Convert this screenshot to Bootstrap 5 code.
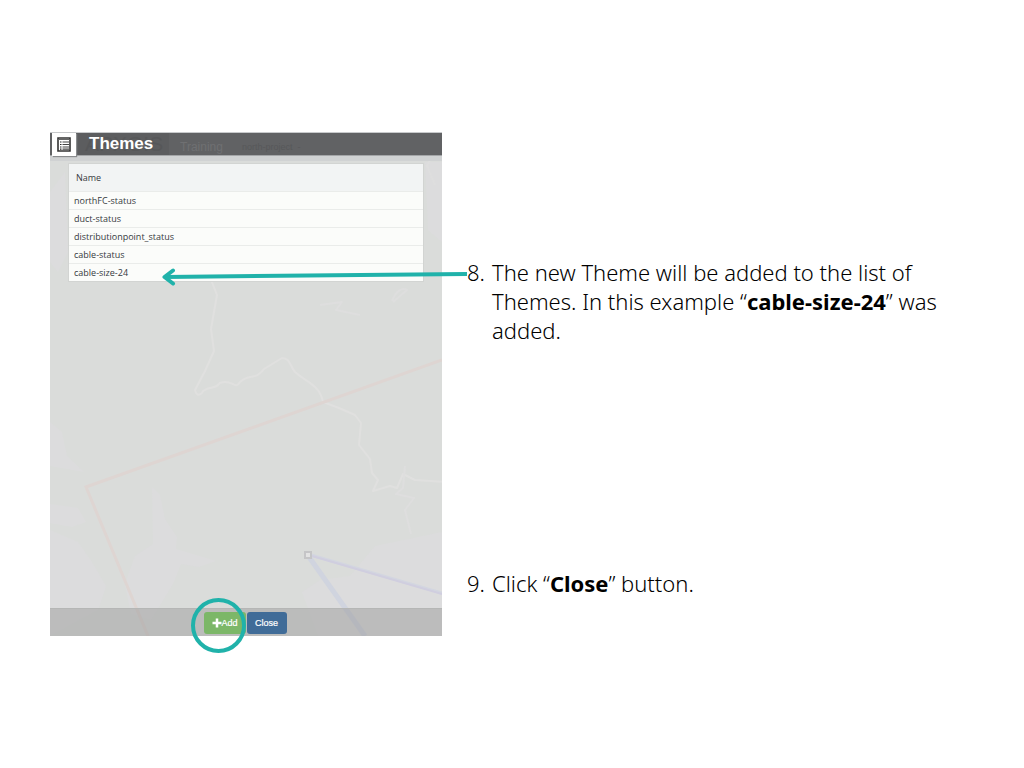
<!DOCTYPE html>
<html lang="en">
<head>
<meta charset="utf-8">
<meta name="viewport" content="width=device-width, initial-scale=1">
<title>Themes guide</title>
<link href="https://cdn.jsdelivr.net/npm/bootstrap@5.3.0/dist/css/bootstrap.min.css" rel="stylesheet">
<style>
body { background: #fff; color: #000; font-family: "Noto Sans", "Open Sans", sans-serif; }
.guide { display: grid; grid-template-columns: 392fr 507fr; column-gap: 25px; padding: 50px; }
.themes-panel { min-height: 504px; background: #dadcda; }
.map-art { inset: 0; width: 100%; height: 100%; }
.panel-head { height: 24px; background: #616264; border-top: 1px solid #c8cacc; border-bottom: 1px solid #a4a6a8; box-shadow: 0 5px 0 #d0d2d3; padding-left: 2px; font-family: "Liberation Sans", Arial, sans-serif; }
.menu-btn { width: 24px; height: 23px; background: #fff; border: 0; box-shadow: 1px 1px 1px #8a8c8e; }
.panel-title { width: 62px; margin-left: 13px; font-size: 17px; line-height: 22px; font-weight: 700; color: #fff; }
.ghost { color: #6f7072; line-height: 29px; white-space: nowrap; }
.ghost-brand { left: 27px; top: 0; width: 92px; height: 22px; padding-left: 8px; background: #5c5d5f; color: #565759; font-size: 21px; line-height: 22px; white-space: nowrap; }
.ghost-site { margin-left: 29px; font-size: 12px; }
.ghost-project { margin-left: 19px; font-size: 9px; color: #57585a; }
.theme-table { background: #fbfcfa; font-family: "Open Sans", "Noto Sans", sans-serif; font-size: 9px; line-height: 17px; color: #363a3e; outline: 1px solid #d2d4d2; }
.theme-table th { height: 27px; padding: 0 7px; font-weight: 400; background: #f2f4f4; }
.theme-table td { height: 18px; padding: 0 5px; border-top: 1px solid #eaecea; }
.table-area { padding: 8px 19px; }
.panel-foot { height: 28px; gap: 1px; padding-right: 2px; background: rgba(148, 148, 148, .45); border-top: 1px solid #b5b6b5; }
.foot-btn { height: 22px; border: 0; border-radius: 3px; padding: 0 8px; color: #fff; font: 9px/22px "Liberation Sans", Arial, sans-serif; -webkit-text-stroke: .2px #fff; }
.add-btn { width: 42px; background: #7cb768; }
.close-btn { width: 40px; background: #406c98; }
.ring { width: 55px; height: 55px; left: -13px; top: -14px; border: 4px solid #20b2aa; border-radius: 50%; pointer-events: none; }
.pointer { left: 112px; top: 132px; width: calc(100% - 87px); height: 24px; pointer-events: none; }
.steps { padding: 126px 0 38px; font-size: 22px; line-height: 29px; font-weight: 300; }
.step-no { flex: 0 0 25px; }
</style>
</head>
<body>
<main class="min-vh-100 d-flex align-items-center">
  <div class="guide w-100">
    <div class="position-relative">
      <section class="themes-panel position-relative d-flex flex-column" aria-label="Themes">
        <svg class="map-art position-absolute" viewBox="0 0 392 504" preserveAspectRatio="xMidYMid slice" aria-hidden="true" fill="none">
          <g fill="#dcdcdd">
            <path d="M0 290l12 10 5 24 17 16-34-6zM0 372l28 4 8 14-14 5-22-4zM0 398l28 12 14 20 14 24-8 24-48 26zM102 355l8 8 5 24 12 18-1 12 40 12-17 6-18-3-8 20-22 36-20-6-6-30 10-28 18-12zM252 460l18-12 30-4 25-30 67-14v104H268z"/>
            <path d="M0 60l15-20 3 80-10 20-8-10zM375 30h17v80l-14-12z"/>
          </g>
          <g stroke="#e0e0df" stroke-width="2" stroke-linejoin="round">
            <path d="M160 145l7 18-6 34 3 22-9 20-10 19c2 8 7 4 8 1 10-7 10 0 17-8 12-5 15 8 20-1 10-9 15-1 24-13l18-11c8 0 8 8 13 14 11 10 25 13 28 30l16 6 16 7 6 8-2 22 11 14 2 14 6 7-5 11 17-5 7 2 6-14 12 6 30 2"/>
          </g>
          <g stroke="#dedede" stroke-width="2" stroke-linejoin="round">
            <path d="M355 334l-2 22-7 6 18 4-9 12 6 24M270 173l22-3-6 8 24 5M342 169c4-10 10-14 15-11l-14 12M383 22l-6 12 8 19"/>
          </g>
          <path d="M98 504L36 355 392 228" stroke="#ded5d2" stroke-width="3"/>
          <path d="M259 425l56 79" stroke="#d0d4df" stroke-width="5"/>
          <path d="M261 423l131 38" stroke="#d3d6e0" stroke-width="3"/>
          <path d="M262 424l130 38" stroke="#d0cedf" stroke-width="2"/>
          <path d="M255 420h6v6h-6z" fill="#e3e3e3" stroke="#c5c5c7" stroke-width="2"/>
        </svg>

        <header class="panel-head position-relative d-flex align-items-start">
          <span class="ghost-brand position-absolute" aria-hidden="true">APXGIS</span>
          <button class="menu-btn position-relative p-0 d-flex align-items-center justify-content-center" type="button" aria-label="Theme list">
            <svg width="14" height="15" viewBox="0 0 14 15" fill="none">
              <path d="M1 1h12v13H1z" fill="#fff" stroke="#333" stroke-width="1.600"/>
              <path d="M1 2.500h12" stroke="#666"/>
              <path d="M3 5h1.500M3 7.500h1.500M3 10h1.500M3 12.200h1.500" stroke="#222" stroke-width="1.200"/>
              <path d="M5.500 5H12M5.500 7.500H12M5.500 10H12M5.500 12.200H12" stroke="#444" stroke-width="1.200"/>
            </svg>
          </button>
          <h1 class="panel-title position-relative mb-0">Themes</h1>
          <span class="ghost ghost-site">Training</span>
          <span class="ghost ghost-project">north-project &nbsp;-</span>
        </header>

        <div class="table-area position-relative flex-grow-1">
          <table class="theme-table w-100">
            <thead><tr><th scope="col">Name</th></tr></thead>
            <tbody>
              <tr><td>northFC-status</td></tr>
              <tr><td>duct-status</td></tr>
              <tr><td>distributionpoint_status</td></tr>
              <tr><td>cable-status</td></tr>
              <tr><td>cable-size-24</td></tr>
            </tbody>
          </table>
        </div>

        <footer class="panel-foot position-relative d-flex justify-content-center align-items-center">
          <div class="position-relative d-flex">
            <button class="foot-btn add-btn d-flex align-items-center" type="button">
              <svg class="flex-shrink-0" width="10" height="10" viewBox="0 0 10 10" aria-hidden="true"><path d="M5 .5v9M.5 5h9" stroke="#fff" stroke-width="2.500"/></svg>Add
            </button>
            <span class="ring position-absolute z-1"></span>
          </div>
          <button class="foot-btn close-btn" type="button">Close</button>
        </footer>
      </section>
      <svg class="pointer position-absolute" aria-hidden="true" fill="none" stroke="#20b2aa" stroke-width="4">
        <line x1="3" y1="13" x2="100%" y2="10"/>
        <path d="M11 6.500L2.500 13l8.500 6.500" stroke-linecap="round" stroke-linejoin="round"/>
      </svg>
    </div>

    <div class="steps d-flex flex-column justify-content-between">
      <div class="d-flex"><span class="step-no">8.</span><p class="mb-0">The new Theme will be added to the list of Themes. In this example “<strong class="fw-bold">cable-size-24</strong>” was added.</p></div>
      <div class="d-flex"><span class="step-no">9.</span><p class="mb-0">Click “<strong class="fw-bold">Close</strong>” button.</p></div>
    </div>
  </div>
</main>
<script src="https://cdn.jsdelivr.net/npm/bootstrap@5.3.0/dist/js/bootstrap.bundle.min.js"></script>
</body>
</html>
